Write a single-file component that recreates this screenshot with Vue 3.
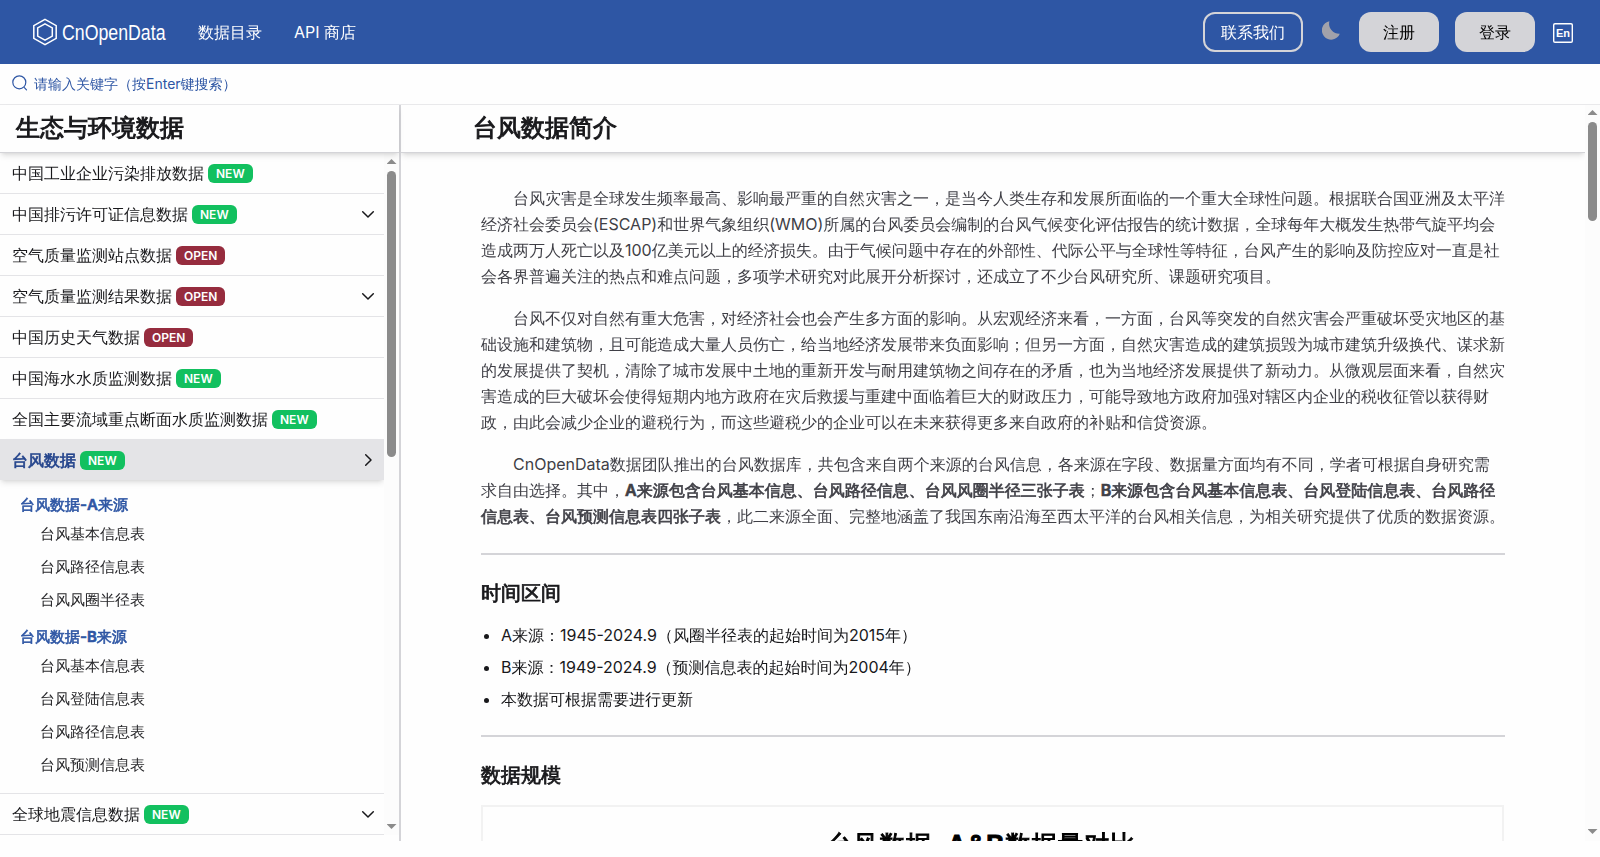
<template>
  <div class="page">
    <header class="navbar">
      <a class="brand">
        <svg width="26" height="28" viewBox="0 0 26 28" fill="none" stroke="#fff" stroke-width="1.5">
          <path d="M13 1.3 24.2 7.6v12.8L13 26.7 1.8 20.4V7.6z" />
          <path d="M13 5.8 20.3 9.9v8.2L13 22.2 5.7 18.1V9.9z" />
        </svg>
        <svg class="brand-name" width="106" height="34" viewBox="0 0 106 34">
          <text x="1" y="25" textLength="103.5" lengthAdjust="spacingAndGlyphs">CnOpenData</text>
        </svg>
      </a>
      <nav class="nav-links">
        <a>数据目录</a>
        <a>API 商店</a>
      </nav>
      <div class="nav-actions">
        <button class="btn btn-outline">联系我们</button>
        <svg class="moon" width="18" height="19" viewBox="0 0 18 19" fill="#a1a1aa">
          <path d="M7.4.2A10 10 0 0 0 17.8 12.7 9.3 9.3 0 1 1 7.4.2z" />
        </svg>
        <button class="btn">注册</button>
        <button class="btn">登录</button>
        <span class="lang">En</span>
      </div>
    </header>

    <div class="search-bar">
      <svg width="16" height="16" viewBox="0 0 16 16" fill="none" stroke="#2e56a4" stroke-width="1.2" stroke-linecap="round">
        <circle cx="7.3" cy="7.3" r="6.5" />
        <path d="m12.4 12.7 2.1 2.1" />
      </svg>
      <input v-model="keyword" type="text" placeholder="请输入关键字（按Enter键搜索）">
    </div>

    <div class="body">
      <aside class="sidebar">
        <h2 class="pane-title">生态与环境数据</h2>
        <div class="sidebar-scroll">
          <div class="menu">
            <div v-for="item in menu" :key="item.name" class="menu-block">
              <div :class="['menu-item', { active: item.children }]">
                <span class="menu-name">{{ item.name }}</span>
                <span :class="['tag', item.tag]">{{ item.tag.toUpperCase() }}</span>
                <svg v-if="item.arrow" :class="['arrow', item.arrow]" width="16" height="16" viewBox="0 0 16 16" fill="none" stroke="#18181b" stroke-width="1.5" stroke-linecap="round" stroke-linejoin="round">
                  <path d="m2.7 5.7 5.3 5.3 5.3-5.3" />
                </svg>
              </div>
              <div v-if="item.children" class="submenu">
                <div v-for="group in item.children" :key="group.name" class="group">
                  <div class="group-name">{{ group.name }}</div>
                  <div v-for="table in group.tables" :key="table" class="sub-item">{{ table }}</div>
                </div>
              </div>
            </div>
          </div>
          <div class="scrollbar">
            <i class="up"></i>
            <i class="thumb thumb-side"></i>
            <i class="down"></i>
          </div>
        </div>
      </aside>

      <main class="content">
        <div class="content-main">
          <h1 class="pane-title content-title">台风数据简介</h1>
          <article class="article">
            <p>台风灾害是全球发生频率最高、影响最严重的自然灾害之一，是当今人类生存和发展所面临的一个重大全球性问题。根据联合国亚洲及太平洋经济社会委员会(ESCAP)和世界气象组织(WMO)所属的台风委员会编制的台风气候变化评估报告的统计数据，全球每年大概发生热带气旋平均会造成两万人死亡以及100亿美元以上的经济损失。由于气候问题中存在的外部性、代际公平与全球性等特征，台风产生的影响及防控应对一直是社会各界普遍关注的热点和难点问题，多项学术研究对此展开分析探讨，还成立了不少台风研究所、课题研究项目。</p>
            <p>台风不仅对自然有重大危害，对经济社会也会产生多方面的影响。从宏观经济来看，一方面，台风等突发的自然灾害会严重破坏受灾地区的基础设施和建筑物，且可能造成大量人员伤亡，给当地经济发展带来负面影响；但另一方面，自然灾害造成的建筑损毁为城市建筑升级换代、谋求新的发展提供了契机，清除了城市发展中土地的重新开发与耐用建筑物之间存在的矛盾，也为当地经济发展提供了新动力。从微观层面来看，自然灾害造成的巨大破坏会使得短期内地方政府在灾后救援与重建中面临着巨大的财政压力，可能导致地方政府加强对辖区内企业的税收征管以获得财政，由此会减少企业的避税行为，而这些避税少的企业可以在未来获得更多来自政府的补贴和信贷资源。</p>
            <p>CnOpenData数据团队推出的台风数据库，共包含来自两个来源的台风信息，各来源在字段、数据量方面均有不同，学者可根据自身研究需求自由选择。其中，<strong>A来源包含台风基本信息、台风路径信息、台风风圈半径三张子表</strong>；<strong>B来源包含台风基本信息表、台风登陆信息表、台风路径信息表、台风预测信息表四张子表</strong>，此二来源全面、完整地涵盖了我国东南沿海至西太平洋的台风相关信息，为相关研究提供了优质的数据资源。</p>
            <hr>
            <h3>时间区间</h3>
            <ul>
              <li>A来源：1945-2024.9（风圈半径表的起始时间为2015年）</li>
              <li>B来源：1949-2024.9（预测信息表的起始时间为2004年）</li>
              <li>本数据可根据需要进行更新</li>
            </ul>
            <hr>
            <h3>数据规模</h3>
            <div class="chart">
              <div class="chart-title">台风数据<span class="dash">-</span>A&amp;B数据量对比</div>
            </div>
          </article>
        </div>
        <div class="scrollbar scrollbar-main">
          <i class="up"></i>
          <i class="thumb thumb-main"></i>
          <i class="down"></i>
        </div>
      </main>
    </div>
  </div>
</template>

<script setup>
import { ref } from 'vue'

const keyword = ref('')

const menu = ref([
  { name: '中国工业企业污染排放数据', tag: 'new' },
  { name: '中国排污许可证信息数据', tag: 'new', arrow: 'bottom' },
  { name: '空气质量监测站点数据', tag: 'open' },
  { name: '空气质量监测结果数据', tag: 'open', arrow: 'bottom' },
  { name: '中国历史天气数据', tag: 'open' },
  { name: '中国海水水质监测数据', tag: 'new' },
  { name: '全国主要流域重点断面水质监测数据', tag: 'new' },
  {
    name: '台风数据',
    tag: 'new',
    arrow: 'right',
    children: [
      { name: '台风数据-A来源', tables: ['台风基本信息表', '台风路径信息表', '台风风圈半径表'] },
      { name: '台风数据-B来源', tables: ['台风基本信息表', '台风登陆信息表', '台风路径信息表', '台风预测信息表'] }
    ]
  },
  { name: '全球地震信息数据', tag: 'new', arrow: 'bottom' }
])
</script>

<style>
body {
  background: #fefefe;
  overflow: hidden;
}
</style>

<style scoped>
.page {
  height: 857px;
  display: flex;
  flex-direction: column;
  font-family: Inter, "WenQuanYi Zen Hei", "Noto Sans CJK SC", sans-serif;
  font-size: 16px;
  color: #18181b;
}

.page * {
  box-sizing: border-box;
}

/* the CJK face has a single weight, a thin stroke makes the bold */
.pane-title,
.active .menu-name,
.group-name,
.article strong,
.article h3,
.chart-title {
  font-weight: 600;
  -webkit-text-stroke: 0.04em currentColor;
}

.navbar {
  height: 64px;
  flex-shrink: 0;
  display: flex;
  align-items: center;
  padding: 0 27px 0 32px;
  background: #2e56a4;
  color: #fff;
}

.brand {
  display: flex;
  align-items: center;
  gap: 3px;
  margin-top: -1px;
}

.brand-name text {
  font-family: "Liberation Sans", sans-serif;
  font-size: 22.5px;
  fill: #fff;
}

.nav-links {
  display: flex;
  gap: 32px;
  margin-left: 31px;
  padding-top: 2px;
}

.nav-actions {
  display: flex;
  align-items: center;
  margin-left: auto;
}

.btn {
  width: 80px;
  height: 40px;
  margin-left: 16px;
  padding: 2px 0 0;
  border: none;
  border-radius: 12px;
  background: #d4d4d8;
  color: #000;
  font-family: inherit;
  font-size: 16px;
}

.btn-outline {
  width: 100px;
  border: 2px solid #d4d4d8;
  background: transparent;
  color: #fff;
}

.moon {
  margin: -4px 3px 0 19px;
}

.lang {
  display: flex;
  align-items: center;
  justify-content: center;
  width: 20px;
  height: 20px;
  margin: 1px 0 0 18px;
  border-radius: 2px;
  box-shadow: inset 0 0 0 1.4px #fff;
  font-family: "Liberation Sans", sans-serif;
  font-size: 11px;
  font-weight: 700;
}

.search-bar {
  height: 41px;
  flex-shrink: 0;
  display: flex;
  align-items: center;
  gap: 6px;
  padding-left: 12px;
  border-bottom: 1px solid #e9e9eb;
}

.search-bar svg {
  margin-top: -2px;
}

.search-bar input {
  width: 300px;
  padding: 0 0 2px;
  border: none;
  outline: none;
  background: transparent;
  font-family: inherit;
  font-size: 14px;
}

.search-bar input::placeholder {
  color: #2e56a4;
}

.body {
  height: 736px;
  display: flex;
}

.sidebar {
  width: 401px;
  flex-shrink: 0;
  display: flex;
  flex-direction: column;
  border-right: 2px solid #d4d4d8;
}

.pane-title {
  position: relative;
  height: 48px;
  flex-shrink: 0;
  margin: 0;
  padding-left: 16px;
  border-bottom: 1px solid #d4d4d8;
  box-shadow: 0 4px 6px -1px rgba(0, 0, 0, 0.1), 0 2px 4px -2px rgba(0, 0, 0, 0.1);
  font-size: 24px;
  line-height: 45px;
}

.sidebar-scroll {
  height: 682px;
  display: flex;
}

.menu {
  flex: 1;
}

.menu-block + .menu-block {
  border-top: 1px solid #e4e4e7;
}

.menu-block:last-child {
  border-bottom: 1px solid #e4e4e7;
}

.menu-item {
  height: 40px;
  display: flex;
  align-items: center;
  padding: 0 8px 0 12px;
}

.menu-item.active {
  height: 41px;
  margin-top: -1px;
  background: #e4e4e7;
  box-shadow: 0 4px 6px -1px rgba(0, 0, 0, 0.1), 0 2px 4px -2px rgba(0, 0, 0, 0.1);
}

.menu-name {
  padding-top: 2px;
}

.active .menu-name {
  color: #24448c;
}

.tag {
  height: 19px;
  margin: 1px 0 0 4px;
  padding: 0 8px;
  border-radius: 6px;
  color: #fff;
  font-size: 12px;
  font-weight: 600;
  line-height: 19px;
}

.tag.new { background: #12c05f; }
.tag.open { background: #962c3e; }

.arrow {
  margin-left: auto;
}

.arrow.right {
  transform: rotate(-90deg);
}

.submenu {
  padding: 4px 0 12px 20px;
  font-size: 15px;
}

.group {
  padding-top: 8px;
}

.group-name {
  height: 25px;
  color: #2e56a4;
  line-height: 25px;
}

.sub-item {
  height: 33px;
  padding-left: 20px;
  color: #27272a;
  line-height: 33px;
}

.scrollbar {
  width: 15px;
  flex-shrink: 0;
  display: flex;
  flex-direction: column;
  align-items: center;
  padding: 6px 0;
  background: #fcfcfc;
}

.scrollbar-main {
  padding: 5px 0 7px;
}

.up,
.down {
  width: 10px;
  height: 5px;
  background: #8b8b8b;
}

.up {
  clip-path: polygon(50% 0, 100% 100%, 0 100%);
}

.down {
  margin-top: auto;
  clip-path: polygon(0 0, 100% 0, 50% 100%);
}

.thumb {
  width: 9px;
  margin-top: 7px;
  border-radius: 5px;
  background: #8b8b8b;
}

.thumb-side {
  height: 286px;
}

.thumb-main {
  height: 99px;
}

.content {
  flex: 1;
  display: flex;
}

.content-main {
  flex: 1;
  display: flex;
  flex-direction: column;
  overflow: hidden;
}

.content-title {
  padding-left: 72px;
}

.article {
  width: 1024px;
  margin: 0 auto;
  padding-top: 32px;
}

.article p {
  margin: 0 0 16px;
  color: #3f3f46;
  line-height: 26px;
  text-indent: 2em;
}

.article hr {
  height: 2px;
  margin: 24px 0;
  border: none;
  background: #d4d4d8;
}

.article h3 {
  margin: 0;
  color: #18181b;
  font-size: 20px;
  line-height: 28px;
}

.article ul {
  margin: 12px 0 0;
  padding-left: 20px;
}

.article ul + hr {
  margin-top: 20px;
}

.article li {
  padding: 4px 0;
  line-height: 24px;
}

.chart {
  width: 1023px;
  height: 300px;
  margin-top: 16px;
  padding: 19px 21px 0 0;
  border: 2px solid #f2f2f2;
  text-align: center;
}

.chart-title {
  color: #000;
  font-family: "Liberation Sans", "WenQuanYi Zen Hei", "Noto Sans CJK SC", sans-serif;
  font-size: 25px;
  letter-spacing: 1.2px;
  line-height: 36px;
}

.dash {
  padding: 0 3px;
}
</style>
